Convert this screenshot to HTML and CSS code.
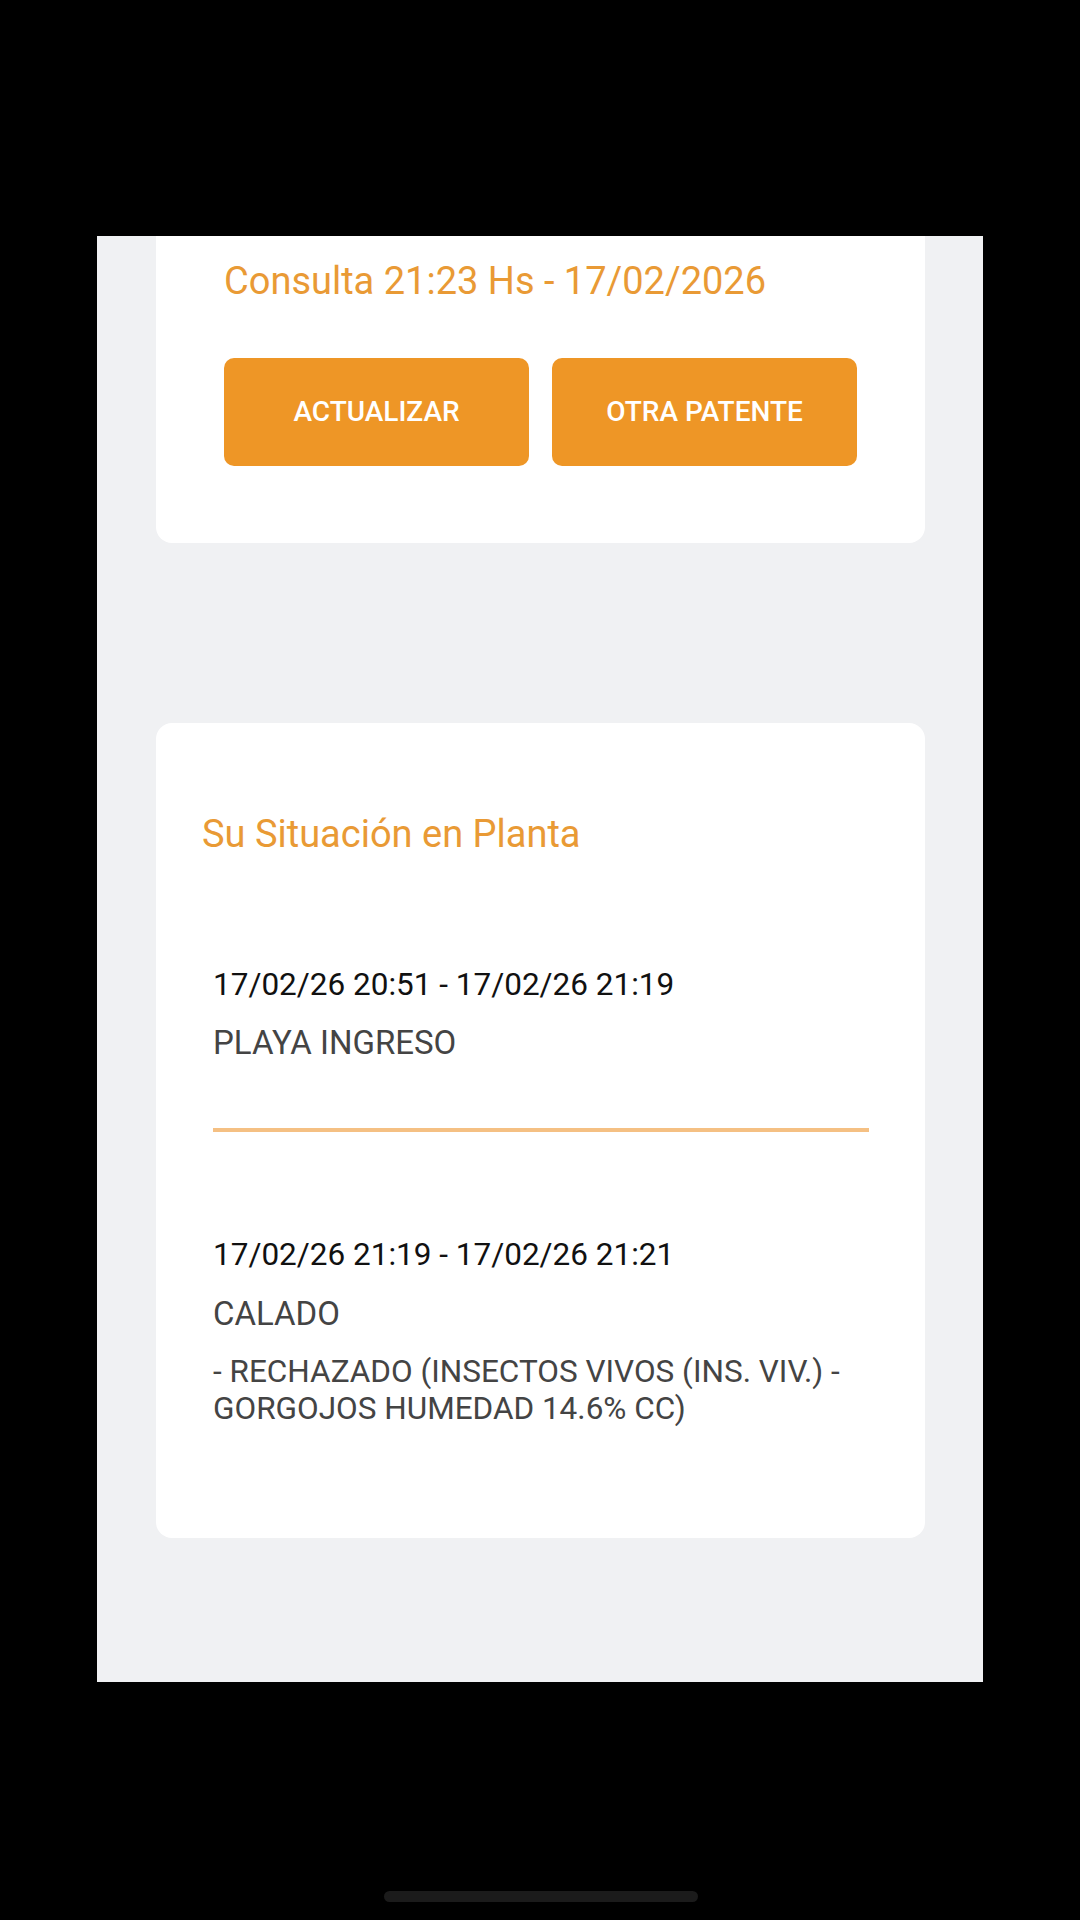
FILE: index.html
```html
<!DOCTYPE html>
<html lang="es">
<head>
    <meta charset="UTF-8">
    <meta name="viewport" content="width=device-width, initial-scale=1.0">
    <title>Consulta de Patente</title>
    <link rel="stylesheet" href="styles.css">
</head>
<body>
    <div class="status-bar"></div>

    <div class="screen">
        <div class="content">
            <!-- Consulta actual -->
            <div class="card card-consulta">
                <h2 class="consulta-title">Consulta 21:23 Hs - 17/02/2026</h2>
                <div class="btn-row">
                    <button type="button" class="btn">ACTUALIZAR</button>
                    <button type="button" class="btn">OTRA PATENTE</button>
                </div>
            </div>

            <!-- Situacion en planta -->
            <div class="card card-situacion">
                <h3 class="section-title">Su Situación en Planta</h3>
                <div class="steps">
                    <div class="step">
                        <div class="step-date">17/02/26 20:51 - 17/02/26 21:19</div>
                        <div class="step-name">PLAYA INGRESO</div>
                    </div>
                    <div class="step">
                        <div class="step-date">17/02/26 21:19 - 17/02/26 21:21</div>
                        <div class="step-name">CALADO</div>
                        <div class="step-detail">- RECHAZADO (INSECTOS VIVOS (INS. VIV.) - GORGOJOS HUMEDAD 14.6% CC)</div>
                    </div>
                </div>
            </div>
        </div>
    </div>

    <div class="nav-bar">
        <div class="home-indicator"></div>
    </div>
</body>
</html>
```

FILE: styles.css
```css
body {
    margin: 0;
    padding: 0;
    width: 1080px;
    height: 1920px;
    background-color: #000;
    font-family: Roboto, "Noto Sans", Arial, sans-serif;
    overflow: hidden;
}

.status-bar {
    height: 236px;
}

.screen {
    width: 886px;
    height: 1446px;
    margin-left: 97px;
    background-color: #f0f1f3;
    overflow: hidden;
}

.content {
    padding: 0 58px 0 59px;
}

.card {
    background-color: #fff;
    border-radius: 16px;
}

.card-consulta {
    margin-top: -20px;
    padding: 43px 68px 77px 68px;
}

.consulta-title {
    margin: 0;
    font-size: 38px;
    line-height: 44px;
    font-weight: 400;
    color: #e99a35;
    white-space: nowrap;
}

.btn-row {
    display: grid;
    grid-template-columns: 1fr 1fr;
    gap: 23px;
    margin-top: 55px;
}

.btn {
    height: 108px;
    border: none;
    border-radius: 10px;
    background-color: #ee9626;
    color: #fff;
    font-family: Roboto, "Noto Sans", Arial, sans-serif;
    font-size: 28px;
    font-weight: 500;
    line-height: 108px;
    padding: 0;
    cursor: pointer;
}

.card-situacion {
    margin-top: 180px;
    padding: 89px 56px 111px 46px;
}

.section-title {
    margin: 0;
    font-size: 38px;
    line-height: 44px;
    font-weight: 400;
    color: #e99a35;
}

.steps {
    margin-top: 109.5px;
    padding-left: 11px;
}

.step {
    padding-bottom: 65.5px;
    border-bottom: 4px solid #f5c083;
}

.step + .step {
    padding-top: 104.5px;
    padding-bottom: 0;
    border-bottom: none;
}

.step-date {
    font-size: 31.5px;
    line-height: 38px;
    color: #111;
}

.step-name {
    margin-top: 20.5px;
    font-size: 33px;
    line-height: 38px;
    color: #444;
}

.step-detail {
    margin-top: 20px;
    font-size: 31.5px;
    line-height: 37px;
    color: #444;
}

.nav-bar {
    height: 238px;
    display: flex;
    justify-content: center;
    align-items: flex-end;
}

.home-indicator {
    width: 314px;
    height: 11px;
    margin-bottom: 18px;
    margin-left: 2px;
    border-radius: 6px;
    background-color: #1b1b1b;
}
```
